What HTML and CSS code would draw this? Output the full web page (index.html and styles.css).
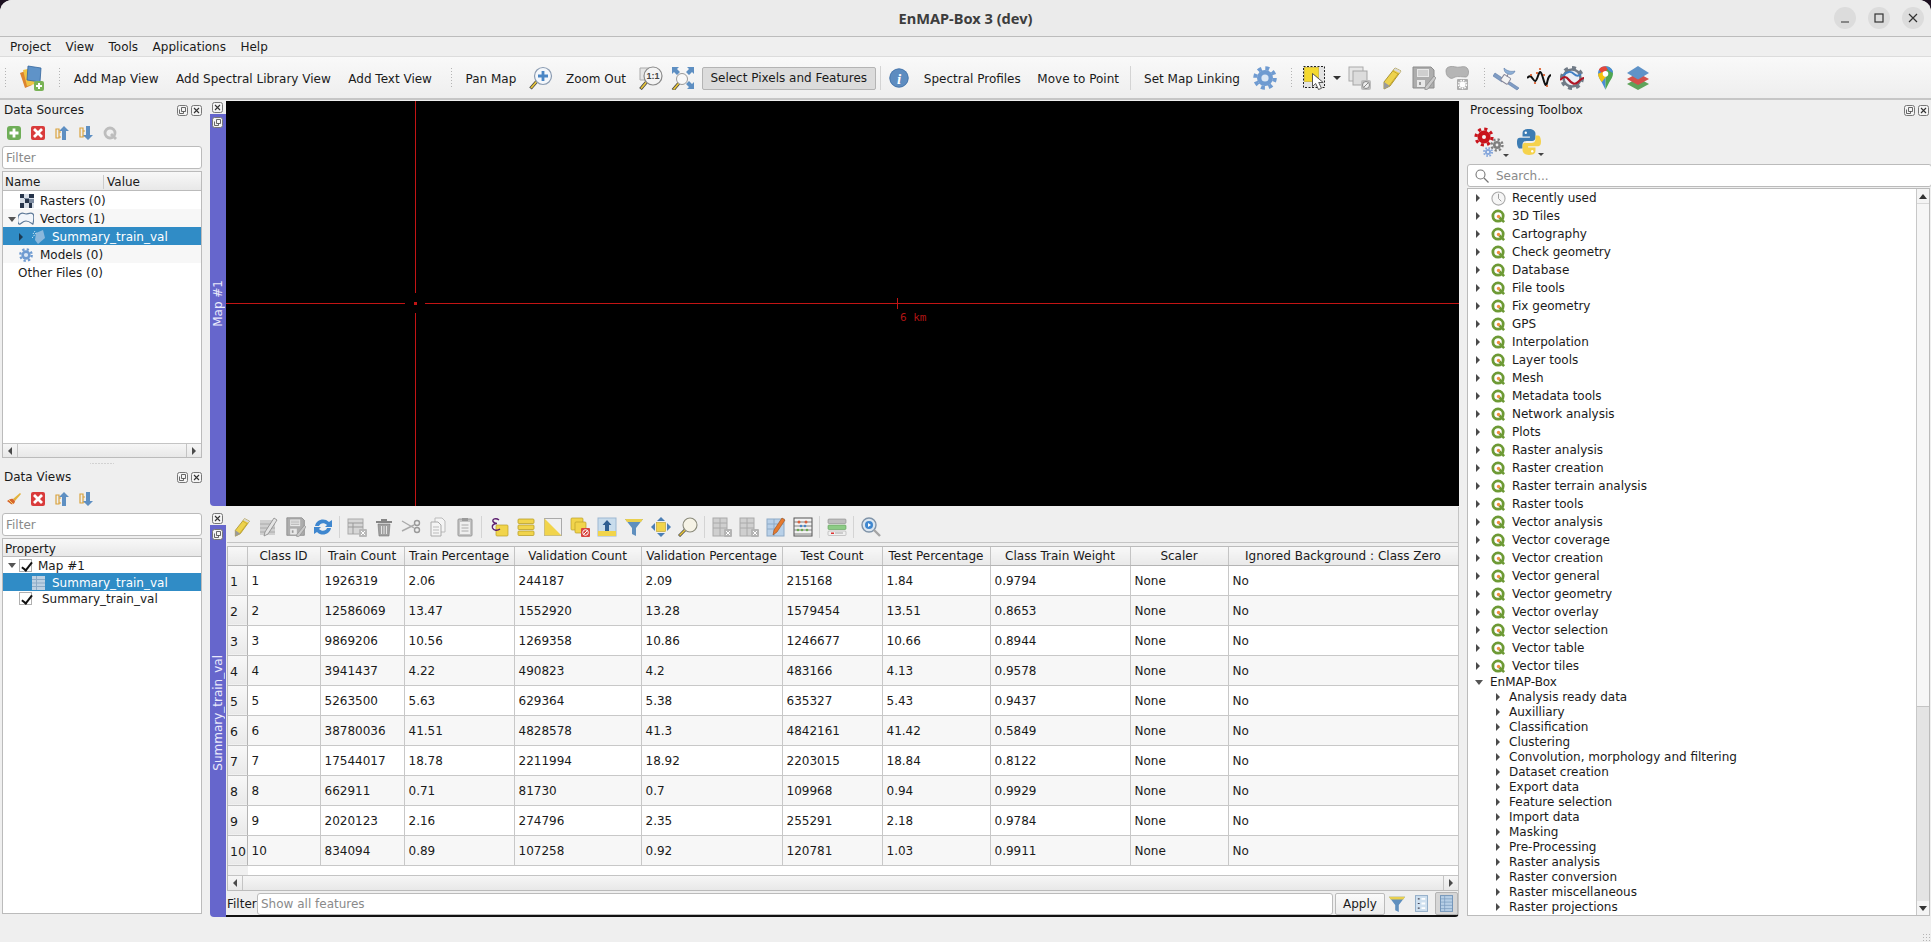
FILE: index.html
```html
<!DOCTYPE html>
<html lang="en">
<head>
    <meta charset="UTF-8">
    <title>EnMAP-Box 3 (dev)</title>
    <link rel="stylesheet" href="styles.css">
</head>
<body>

<!-- icon sprite -->
<svg class="sprite" xmlns="http://www.w3.org/2000/svg">
    <symbol id="i-project" viewBox="0 0 26 26"><path d="M1 8l8-3 4 15-7 3z" fill="#dd8430"/><path d="M4 5l9-2 3 16-8 2z" fill="#f0c445"/><path d="M9 1l13 2-1 14-13-2z" fill="#5f93c8" stroke="#34659c" stroke-width=".8"/><rect x="15" y="16" width="10" height="10" rx="2" fill="#79b356"/><path d="M20 18v6M17 21h6" stroke="#fff" stroke-width="2"/></symbol>
    <symbol id="i-zoomin" viewBox="0 0 24 24"><path d="M1.500 22.500l7-8" stroke="#444" stroke-width="3.400"/><path d="M2 22l6.500-7.500" stroke="#e8c53a" stroke-width="1.800"/><circle cx="14" cy="10" r="8.500" fill="#f4f7fb" stroke="#8b9cb2" stroke-width="1.200"/><path d="M14 5v10M9 10h10" stroke="#4a86c5" stroke-width="2.800"/></symbol>
    <symbol id="i-zoom1" viewBox="0 0 24 24"><path d="M1 2h11v12H1z" fill="#e6e6e6" stroke="#aaa"/><path d="M1.500 23l6-7" stroke="#444" stroke-width="3.400"/><path d="M2 22.500l5.500-6.500" stroke="#e8c53a" stroke-width="1.800"/><circle cx="14" cy="10" r="9" fill="#f4f4f4" stroke="#8a8a8a" stroke-width="1.200"/><text x="14" y="13" font-size="9" font-weight="bold" text-anchor="middle" font-family="Liberation Sans, sans-serif" fill="#444">1:1</text></symbol>
    <symbol id="i-zoomfull" viewBox="0 0 24 24"><path d="M1 1h7L6 3l3 3-3 3-3-3-2 2zM23 1v7l-2-2-3 3-3-3 3-3-2-2zM23 23h-7l2-2-3-3 3-3 3 3 2-2z" fill="#5e8fc2"/><path d="M2 24l6-7" stroke="#444" stroke-width="3.400"/><path d="M2.500 23.500l5.500-6.500" stroke="#e8c53a" stroke-width="1.800"/><circle cx="11" cy="13" r="5.500" fill="#f8f8f8" stroke="#999"/></symbol>
    <symbol id="i-info" viewBox="0 0 20 20"><circle cx="10" cy="10" r="9.600" fill="#5d8cc0"/><circle cx="10" cy="10" r="9.200" fill="none" stroke="#3f6fa5" stroke-width=".7"/><text x="10" y="16" font-size="15" font-weight="bold" font-style="italic" text-anchor="middle" font-family="Liberation Serif, serif" fill="#fff">i</text></symbol>
    <symbol id="i-gear" viewBox="0 0 24 24"><circle cx="12" cy="12" r="8" fill="#6f9bd1"/><circle cx="12" cy="12" r="9.800" fill="none" stroke="#6f9bd1" stroke-width="4" stroke-dasharray="3.900 3.800"/><circle cx="12" cy="12" r="3.600" fill="#dbe7f5"/></symbol>
    <symbol id="i-select" viewBox="0 0 24 24"><rect x=".5" y=".5" width="21" height="21" fill="#e4e4e4" stroke="#222" stroke-dasharray="2 1.500"/><rect x="1.500" y="1.500" width="14" height="14" fill="#f4d92f" stroke="#c8ac1c" stroke-width=".6"/><path d="M9.500 7.500v13l3.200-3 2.800 6 3-1.200-2.800-5.800h4.500z" fill="#fff" stroke="#444" stroke-width=".9"/></symbol>
    <symbol id="i-deselect" viewBox="0 0 24 24"><rect x="1" y="1" width="14" height="14" fill="#e6e6e6" stroke="#aaa"/><rect x="5" y="5" width="14" height="14" fill="#dcdcdc" stroke="#a5a5a5"/><rect x="13" y="14" width="10" height="10" rx="2" fill="#bcbcbc"/><circle cx="18" cy="19" r="3.500" fill="#eee" stroke="#888"/><path d="M16 21l4-4" stroke="#888"/></symbol>
    <symbol id="i-pencil" viewBox="0 0 24 24"><path d="M15 2l6 3-11 15-6 3 0-7z" fill="#edd24d" stroke="#a28c2c" stroke-width=".9"/><path d="M13 5l5 3-9 12" fill="none" stroke="#c9a92b" stroke-width="1"/><path d="M4 16l0 7 6-3z" fill="#9a9a9a"/><path d="M15 2l6 3-1.500 2-6-3z" fill="#d8d8d8"/></symbol>
    <symbol id="i-save" viewBox="0 0 24 24"><path d="M1 1h18l3 3v18H1z" fill="#adadad" stroke="#8c8c8c"/><rect x="5" y="3" width="12" height="8" fill="#e8e8e8"/><path d="M6 5h10M6 7h10M6 9h10" stroke="#aaa" stroke-width=".8"/><rect x="5" y="14" width="8" height="7" fill="#e8e8e8"/><rect x="7" y="16" width="2" height="3" fill="#999"/><path d="M22 10l2 2-8 11-3 1 0-3z" fill="#c9c9c9" stroke="#888" stroke-width=".7"/></symbol>
    <symbol id="i-vecgear" viewBox="0 0 26 26"><path d="M2 6c0-5 6-5 10-4s8-2 11 1 1 9-1 9-9-1-11 0-3 2-5 1-4-3-4-7z" fill="#b5b5b5" stroke="#999" stroke-width=".8"/><rect x="13" y="14" width="11" height="11" rx="1" fill="#adadad"/><circle cx="18.500" cy="19.500" r="3" fill="#fff"/><circle cx="18.500" cy="19.500" r="4" fill="none" stroke="#fff" stroke-width="1.400" stroke-dasharray="1.500 1.200"/></symbol>
    <symbol id="i-sat" viewBox="0 0 26 26"><path d="M2 8l9 6-2 3-9-6zM17 17l9 6-2 2-9-6z" fill="#7f9cc4" stroke="#5a7ba8" stroke-width=".6"/><rect x="9" y="11" width="8" height="7" rx="1" transform="rotate(33 13 14)" fill="#f4f4f4" stroke="#889"/><path d="M11 3c3 3 7 4 11 3-1 3-4 4-7 3s-4-3-4-6z" fill="#8eb0d6" stroke="#5a7ba8" stroke-width=".6"/><path d="M15 9l-1 3" stroke="#889"/></symbol>
    <symbol id="i-spectral" viewBox="0 0 24 24"><path d="M0 12c3-3 4-2 6 1s3 3 5-3 3-5 5 2 3 9 4 5 1-7 4-8" fill="none" stroke="#111" stroke-width="2"/><g fill="#d9531e"><circle cx="4" cy="9" r="1.100"/><circle cx="10" cy="7" r="1.100"/><circle cx="13" cy="3" r="1.100"/><circle cx="17" cy="9" r="1.100"/><circle cx="20" cy="20" r="1.100"/><circle cx="8" cy="17" r="1.100"/></g></symbol>
    <symbol id="i-hub" viewBox="0 0 24 24"><circle cx="12" cy="12" r="8.500" fill="#e9eef5" stroke="#707a86" stroke-width="2.500"/><circle cx="12" cy="12" r="10.500" fill="none" stroke="#707a86" stroke-width="3" stroke-dasharray="4 4.200"/><path d="M3 10c4-5 8-5 11-2s5 2 7 0" fill="none" stroke="#3f7fc4" stroke-width="1.800"/><path d="M0 14c4-4 6-4 9 0s6 5 9 2 4-4 6-4" fill="none" stroke="#b01626" stroke-width="2.200"/></symbol>
    <symbol id="i-pin" viewBox="0 0 16 26"><path d="M8 0C3 0 0 3.500 0 8c0 3 2 6 4 9l4 8z" fill="#4a8bd8"/><path d="M8 0c5 0 8 3.500 8 8 0 3-2 6-4 9l-4 8z" fill="#4fa653"/><path d="M1 3.500C2.500 1.200 5 0 8 0l3 2-6 7z" fill="#e6473a"/><path d="M8 0c4 0 8 3 8 7l-4-2z" fill="#4a8bd8"/><path d="M0 8c0 3 2 6 4 9l6-8-5-3z" fill="#f4c20d"/><circle cx="8" cy="8" r="3" fill="#fff"/></symbol>
    <symbol id="i-layers" viewBox="0 0 24 24"><path d="M12 12l11 6-11 6-11-6z" fill="#5fa35a"/><path d="M12 7l11 6-11 6-11-6z" fill="#d4504a"/><path d="M12 0l11 7-11 6.500L1 7z" fill="#5f93c8"/></symbol>
    <symbol id="i-add" viewBox="0 0 14 14"><rect width="14" height="14" rx="3" fill="#6fae58"/><path d="M7 2.500v9M2.500 7h9" stroke="#fff" stroke-width="2.800"/></symbol>
    <symbol id="i-remove" viewBox="0 0 14 14"><rect width="14" height="14" rx="2" fill="#d93b3b"/><path d="M3 3l8 8M11 3l-8 8" stroke="#fff" stroke-width="2.800"/></symbol>
    <symbol id="i-collapse" viewBox="0 0 14 14"><path d="M1 3h3v9H1zM4 6h2M4 11h2" fill="none" stroke="#d9a23c" stroke-width="1.200"/><path d="M9 0l5 5h-3v9H7V5H4z" fill="#5e8fc2"/></symbol>
    <symbol id="i-expand" viewBox="0 0 14 14"><path d="M1 2h3v9H1zM4 5h2M4 10h2" fill="none" stroke="#d9a23c" stroke-width="1.200"/><path d="M9 14l5-5h-3V0H7v9H4z" fill="#5e8fc2"/></symbol>
    <symbol id="i-greyq" viewBox="0 0 14 14"><circle cx="7" cy="7" r="5" fill="none" stroke="#bdbdbd" stroke-width="2.800"/><path d="M8 8l5 5" stroke="#bdbdbd" stroke-width="2.800"/></symbol>
    <symbol id="i-brush" viewBox="0 0 14 14"><path d="M13 1L6 7l2 2 6-7z" fill="#e2b23c"/><path d="M0 9c2-1 4-3 6-2l2 2c0 2-2 4-4 3z" fill="#d8652a"/><path d="M2 8l4 4" stroke="#f0d070"/></symbol>
    <symbol id="i-raster" viewBox="0 0 14 14"><rect width="14" height="14" fill="#d8dfe8"/><path d="M0 0h4v4H0zM9 0h5v4H9zM5 5h4v4H5zM0 9h4v5H0zM9 9h3v5H9z" fill="#27354b"/><path d="M4 4h5v1H4zM9 5h5v4H9z" fill="#7c8ba0"/></symbol>
    <symbol id="i-blob" viewBox="0 0 16 14"><path d="M2 2c3-2 4 0 6 0s5-2 7 0 0 9 0 10-3-3-7-3-5 4-7 3-2-8 1-10z" fill="#f2f6fb" stroke="#5e7a99" stroke-width="1.200"/></symbol>
    <symbol id="i-blobsel" viewBox="0 0 14 14"><path d="M4 3l7-3 2 8-7 6-3-4z" fill="#8bb8dc"/><path d="M1 4l2-3M0 8l5-6" stroke="#cfe3f2" stroke-dasharray="1.500 1"/></symbol>
    <symbol id="i-table" viewBox="0 0 13 14"><rect width="13" height="14" fill="#bcd0e2"/><path d="M0 3.500h13M0 7h13M0 10.500h13M4.500 0v14" stroke="#8caac6"/></symbol>
    <symbol id="i-clock" viewBox="0 0 16 16"><circle cx="8" cy="8" r="7" fill="#f6f6f6" stroke="#aaa" stroke-width="1.200"/><path d="M8 3v5l3 3" fill="none" stroke="#999"/></symbol>
    <symbol id="i-qgis" viewBox="0 0 16 16"><circle cx="7.500" cy="7.500" r="5.500" fill="#fff" stroke="#6d9a35" stroke-width="3"/><path d="M9 9l5 5" stroke="#6d9a35" stroke-width="2.800"/><circle cx="8" cy="8" r="1.800" fill="#ee8e3f"/></symbol>
    <symbol id="i-gears" viewBox="0 0 32 30"><circle cx="10" cy="10" r="6.500" fill="#c9141c"/><circle cx="10" cy="10" r="8" fill="none" stroke="#c9141c" stroke-width="3.200" stroke-dasharray="3.100 3.180"/><circle cx="10" cy="10" r="2" fill="#f4f4f4"/><circle cx="23" cy="18" r="4" fill="#7f7f7f"/><circle cx="23" cy="18" r="5.500" fill="none" stroke="#7f7f7f" stroke-width="2.400" stroke-dasharray="2.200 2.100"/><circle cx="23" cy="18" r="1.400" fill="#eee"/><circle cx="14" cy="25" r="3" fill="#86a7db"/><circle cx="14" cy="25" r="4" fill="none" stroke="#86a7db" stroke-width="2" stroke-dasharray="1.600 1.540"/><circle cx="14" cy="25" r="1" fill="#fff"/></symbol>
    <symbol id="i-python" viewBox="0 0 26 30"><path d="M13 1C7 1 6 3 6 6v3h8v1.500H3C0 10.500 0 14 0 16s1 6 3 6h3v-4c0-3 2-4 4.500-4h6c2 0 3.500-1.500 3.500-3.500V6c0-3-3-5-7-5z" fill="#3d7cb3"/><circle cx="9.500" cy="5" r="1.300" fill="#fff"/><path d="M13 29c6 0 7-2 7-5v-3h-8v-1.500h11c3 0 3-3.500 3-5.500s-1-6-3-6h-3v4c0 3-2 4-4.500 4h-6C7.500 15.500 6 17 6 19v5c0 3 3 5 7 5z" fill="#f5d24c"/><circle cx="16.500" cy="25" r="1.300" fill="#fff"/></symbol>
    <symbol id="i-search" viewBox="0 0 14 14"><circle cx="5.500" cy="5.500" r="4.500" fill="none" stroke="#777" stroke-width="1.100"/><path d="M9 9l4.500 4.500" stroke="#777" stroke-width="1.300"/></symbol>
    <symbol id="i-float" viewBox="0 0 11 11"><rect x=".5" y=".5" width="10" height="10" rx="2" fill="#f4f4f4" stroke="#777"/><path d="M4.500 2.500h4v4h-4z M2.500 4.500v4h4v-2" fill="none" stroke="#444" stroke-width=".8"/></symbol>
    <symbol id="i-close" viewBox="0 0 11 11"><rect x=".5" y=".5" width="10" height="10" rx="2" fill="#f4f4f4" stroke="#777"/><path d="M3 3l5 5M8 3l-5 5" stroke="#333" stroke-width="1.100"/></symbol>

    <symbol id="i-editmulti" viewBox="0 0 20 20"><path d="M1 3h15v15H1z" fill="#cfcfcf"/><path d="M1 7h15M1 11h15M1 15h15" stroke="#aaa"/><path d="M15 1l3 2-9 14-4 2 1-4z" fill="#e4e4e4" stroke="#888" stroke-width=".8"/></symbol>
    <symbol id="i-reload" viewBox="0 0 20 20"><path d="M2 9c1-6 9-9 14-4l3-2v7h-7l2-2c-3-3-7-2-8 1z" fill="#3f87cf"/><path d="M18 11c-1 6-9 9-14 4l-3 2v-7h7l-2 2c3 3 7 2 8-1z" fill="#3f87cf"/></symbol>
    <symbol id="i-newrow" viewBox="0 0 20 20"><rect x="1" y="2" width="15" height="15" fill="#d6d6d6" stroke="#aaa"/><path d="M1 6h15M1 10h15M6 6v11" stroke="#999"/><rect x="12" y="12" width="8" height="8" rx="1" fill="#b8b8b8"/><path d="M14 14l4 4M18 14l-4 4" stroke="#fff"/></symbol>
    <symbol id="i-trash" viewBox="0 0 20 20"><path d="M2 4h16v2H2zM7 2h6v2H7z" fill="#858585"/><path d="M4 7h12l-1 12H5z" fill="#a0a0a0" stroke="#777" stroke-width=".6"/><path d="M7.500 9v8M10 9v8M12.500 9v8" stroke="#e4e4e4"/></symbol>
    <symbol id="i-scissors" viewBox="0 0 20 20"><path d="M1 4l12 7M1 14l12-6" stroke="#aaa" stroke-width="1.400"/><circle cx="16" cy="6" r="2.500" fill="none" stroke="#999" stroke-width="1.400"/><circle cx="16" cy="13" r="2.500" fill="none" stroke="#999" stroke-width="1.400"/></symbol>
    <symbol id="i-copy" viewBox="0 0 20 20"><path d="M7 1h7l3 3v11H7z" fill="#f4f4f4" stroke="#bbb"/><path d="M3 5h7l3 3v11H3z" fill="#f4f4f4" stroke="#aaa"/><path d="M5 10h6M5 13h6M5 16h6" stroke="#bbb"/></symbol>
    <symbol id="i-paste" viewBox="0 0 20 20"><rect x="3" y="2" width="14" height="17" rx="1" fill="#c4c4c4" stroke="#999"/><rect x="5" y="5" width="10" height="12" fill="#efefef"/><rect x="7" y="1" width="6" height="3" fill="#999"/><path d="M6.500 8h7M6.500 11h7M6.500 14h7" stroke="#aaa"/></symbol>
    <symbol id="i-selexpr" viewBox="0 0 20 20"><rect x="7" y="8" width="12" height="11" rx="1" fill="#f1d44b" stroke="#b99f2a" stroke-width=".7"/><path d="M10 3C7 .5 3 2 4 4.500 5 6 7 6.500 8 6.500 5 6.500 2.500 8 3.500 11c1 2.500 5 3 7.500 1" fill="none" stroke="#5c1e6e" stroke-width="1.400"/></symbol>
    <symbol id="i-selall" viewBox="0 0 20 20"><g fill="#f1d44b" stroke="#b99f2a" stroke-width=".8"><rect x="2" y="2" width="16" height="4.500" rx="1"/><rect x="2" y="8" width="16" height="4.500" rx="1"/><rect x="2" y="14" width="16" height="4.500" rx="1"/></g></symbol>
    <symbol id="i-invert" viewBox="0 0 20 20"><rect x="1.500" y="1.500" width="17" height="17" fill="#f0f0f0" stroke="#aaa"/><path d="M1.500 1.500v17h17z" fill="#f1d44b"/></symbol>
    <symbol id="i-desel" viewBox="0 0 20 20"><rect x="1" y="1" width="12" height="12" rx="1" fill="#f1d44b" stroke="#b99f2a" stroke-width=".7"/><rect x="5" y="5" width="11" height="11" rx="1" fill="#f1d44b" stroke="#b99f2a" stroke-width=".7"/><rect x="11" y="11" width="9" height="9" rx="1" fill="#d8453e"/><circle cx="15.500" cy="15.500" r="2.800" fill="none" stroke="#fff"/><path d="M13.500 17.500l4-4" stroke="#fff"/></symbol>
    <symbol id="i-movesel" viewBox="0 0 20 20"><rect x="1" y="1" width="18" height="18" fill="#c8dcec" stroke="#9db8d2"/><rect x="1" y="14" width="18" height="5" fill="#f1d44b"/><path d="M10 3l4.500 5H12v6H8V8H5.500z" fill="#2f5f92"/></symbol>
    <symbol id="i-funnel" viewBox="0 0 20 20"><path d="M1 2h18L12 11v8l-4-2v-6z" fill="#5f8fbe"/><path d="M1 2h18l-2 3H3z" fill="#e9cf4e"/></symbol>
    <symbol id="i-panto" viewBox="0 0 20 20"><rect x="5.500" y="5.500" width="9" height="9" fill="#f1d44b" stroke="#b99f2a" stroke-width=".6"/><path d="M10 0l4 4H6zM10 20l-4-4h8zM0 10l4-4v8zM20 10l-4 4V6z" fill="#4c7fb5"/></symbol>
    <symbol id="i-zoomto" viewBox="0 0 20 20"><path d="M1 19l6-6" stroke="#444" stroke-width="3"/><path d="M1.500 18.500l5.500-5.500" stroke="#e8c53a" stroke-width="1.600"/><circle cx="12" cy="8" r="7" fill="#f6f3e6" stroke="#8a8a7a" stroke-width="1.100"/></symbol>
    <symbol id="i-newfield" viewBox="0 0 20 20"><rect x="1" y="1" width="14" height="18" fill="#cfcfcf" stroke="#aaa"/><path d="M8 1v18M1 6h14M1 11h14" stroke="#aaa"/><rect x="12" y="12" width="8" height="8" rx="1" fill="#b4b4b4"/><path d="M14 14l4 4M18 14l-4 4" stroke="#fff"/></symbol>
    <symbol id="i-fieldcalc" viewBox="0 0 20 20"><rect x="1" y="2" width="17" height="17" fill="#b8d0e8" stroke="#8eaac6"/><path d="M1 7h17M1 12h10M8 2v17" stroke="#8eaac6"/><path d="M16 1l3 2-8 12-4 3 1-5z" fill="#e67a2e" stroke="#9c4d18" stroke-width=".6"/></symbol>
    <symbol id="i-abacus" viewBox="0 0 20 20"><rect x="1" y="1" width="18" height="18" fill="#f2f2f2" stroke="#555"/><path d="M1 17h18M1 5h18M1 9h18M1 13h18" stroke="#666" stroke-width=".8"/><g fill="#d9603c"><circle cx="6" cy="5" r="1.500"/><circle cx="13" cy="5" r="1.500"/></g><g fill="#6aa84f"><circle cx="5" cy="13" r="1.300"/><circle cx="9" cy="13" r="1.300"/><circle cx="14" cy="13" r="1.300"/></g><g fill="#4a86c5"><circle cx="8" cy="9" r="1.300"/><circle cx="12" cy="9" r="1.300"/></g></symbol>
    <symbol id="i-cond" viewBox="0 0 20 20"><rect x="1" y="2" width="18" height="4.500" rx="1" fill="#bdbdbd" stroke="#8a8a8a" stroke-width=".6"/><rect x="1" y="8" width="18" height="4.500" rx="1" fill="#8ccb85" stroke="#5c9c55" stroke-width=".6"/><rect x="1" y="14" width="18" height="4.500" rx="1" fill="#efefef" stroke="#aaa" stroke-width=".6"/><rect x="4" y="15.500" width="3" height="1.500" fill="#d33"/><path d="M8 16h8" stroke="#aaa"/></symbol>
    <symbol id="i-actions" viewBox="0 0 20 20"><circle cx="8" cy="8" r="7" fill="#dbe6f0" stroke="#7f93a8" stroke-width="1.400"/><circle cx="8" cy="8" r="4" fill="#3f87cf"/><path d="M7 6l3 2-3 2z" fill="#fff"/><path d="M13 13l6 6" stroke="#a5a5a5" stroke-width="2.400"/></symbol>
    <symbol id="i-form" viewBox="0 0 14 18"><rect x=".5" y=".5" width="13" height="17" fill="#cfe0ef" stroke="#8eaac6"/><path d="M3 4h2M3 9h2M3 14h2" stroke="#445" stroke-width="1.200"/><path d="M7 4h4M7 9h4M7 14h4" stroke="#fff" stroke-width="2"/></symbol>
    <symbol id="i-grid" viewBox="0 0 14 18"><rect x=".5" y=".5" width="13" height="17" fill="#b7cfe6" stroke="#6f93b8"/><path d="M1 4h12M1 7.500h12M1 11h12M1 14.500h12M5 1v16" stroke="#7b9cc0" stroke-width=".8"/></symbol>
</svg>

<div class="window">

    <header class="titlebar">
        <div></div>
        <div class="title">EnMAP-Box 3 (dev)</div>
        <div class="win-buttons">
            <span class="win-btn"><svg viewBox="0 0 12 12"><path d="M2 10h8" stroke="#333" stroke-width="1.200"/></svg></span>
            <span class="win-btn"><svg viewBox="0 0 12 12"><rect x="2" y="2" width="8" height="8" fill="none" stroke="#333" stroke-width="1.200"/></svg></span>
            <span class="win-btn"><svg viewBox="0 0 12 12"><path d="M2 2l8 8M10 2l-8 8" stroke="#333" stroke-width="1.200"/></svg></span>
        </div>
    </header>

    <nav class="menubar">
        <span>Project</span>
        <span>View</span>
        <span>Tools</span>
        <span>Applications</span>
        <span>Help</span>
    </nav>

    <div class="toolbar">
        <span class="tb-handle tb-first"></span>
        <span class="tb-icon w34"><svg class="ic26"><use href="#i-project"/></svg></span>
        <span class="tb-handle"></span>
        <span class="tb-text">Add Map View</span>
        <span class="tb-text">Add Spectral Library View</span>
        <span class="tb-text">Add Text View</span>
        <span class="tb-handle"></span>
        <span class="tb-text">Pan Map</span>
        <span class="tb-icon"><svg class="ic24"><use href="#i-zoomin"/></svg></span>
        <span class="tb-text">Zoom Out</span>
        <span class="tb-icon"><svg class="ic24"><use href="#i-zoom1"/></svg></span>
        <span class="tb-icon"><svg class="ic24"><use href="#i-zoomfull"/></svg></span>
        <span class="tb-toggled">Select Pixels and Features</span>
        <span class="tb-sep"></span>
        <span class="tb-icon w28"><svg class="ic20"><use href="#i-info"/></svg></span>
        <span class="tb-text tb-profiles">Spectral Profiles</span>
        <span class="tb-text">Move to Point</span>
        <span class="tb-sep sep-tight"></span>
        <span class="tb-text">Set Map Linking</span>
        <span class="tb-icon"><svg class="ic24"><use href="#i-gear"/></svg></span>
        <span class="tb-handle"></span>
        <span class="tb-icon tb-select"><svg class="ic24"><use href="#i-select"/></svg></span>
        <span class="tb-caret"></span>
        <span class="tb-icon"><svg class="ic24"><use href="#i-deselect"/></svg></span>
        <span class="tb-icon"><svg class="ic24"><use href="#i-pencil"/></svg></span>
        <span class="tb-icon w33"><svg class="ic24"><use href="#i-save"/></svg></span>
        <span class="tb-icon w33"><svg class="ic26"><use href="#i-vecgear"/></svg></span>
        <span class="tb-handle"></span>
        <span class="tb-icon w33"><svg class="ic26"><use href="#i-sat"/></svg></span>
        <span class="tb-icon w33"><svg class="ic24"><use href="#i-spectral"/></svg></span>
        <span class="tb-icon w33"><svg class="ic24"><use href="#i-hub"/></svg></span>
        <span class="tb-icon w33"><svg class="ic-pin"><use href="#i-pin"/></svg></span>
        <span class="tb-icon w33"><svg class="ic24"><use href="#i-layers"/></svg></span>
    </div>

    <main class="workspace">

        <aside class="left-col">
            <section class="panel panel-sources">
                <div class="panel-title">
                    <span>Data Sources</span>
                    <span class="panel-btns"><svg class="ic11"><use href="#i-float"/></svg><svg class="ic11"><use href="#i-close"/></svg></span>
                </div>
                <div class="panel-tools">
                    <svg class="ic14"><use href="#i-add"/></svg>
                    <svg class="ic14"><use href="#i-remove"/></svg>
                    <svg class="ic14"><use href="#i-collapse"/></svg>
                    <svg class="ic14"><use href="#i-expand"/></svg>
                    <svg class="ic14"><use href="#i-greyq"/></svg>
                </div>
                <div class="line-input placeholder">Filter</div>
                <div class="tree">
                    <div class="tree-head">
                        <span class="head-name">Name</span>
                        <span>Value</span>
                    </div>
                    <div class="tree-body">
                        <div class="row pad-17"><svg class="ic14 gap-6"><use href="#i-raster"/></svg>Rasters (0)</div>
                        <div class="row alt pad-5"><span class="arrow open gap-2"></span><svg class="ic-blob gap-6"><use href="#i-blob"/></svg>Vectors (1)</div>
                        <div class="row selected pad-15"><span class="arrow gap-9 arrow-dark"></span><svg class="ic14 gap-6"><use href="#i-blobsel"/></svg>Summary_train_val</div>
                        <div class="row alt pad-16"><svg class="ic14 gap-7"><use href="#i-gear"/></svg>Models (0)</div>
                        <div class="row pad-15">Other Files (0)</div>
                    </div>
                    <div class="hscroll">
                        <span class="scroll-btn"><span class="arrow left"></span></span>
                        <span class="scroll-track"></span>
                        <span class="scroll-btn"><span class="arrow"></span></span>
                    </div>
                </div>
            </section>
            <div class="splitter"></div>
            <section class="panel panel-views">
                <div class="panel-title">
                    <span>Data Views</span>
                    <span class="panel-btns"><svg class="ic11"><use href="#i-float"/></svg><svg class="ic11"><use href="#i-close"/></svg></span>
                </div>
                <div class="panel-tools tools-views">
                    <svg class="ic14"><use href="#i-brush"/></svg>
                    <svg class="ic14"><use href="#i-remove"/></svg>
                    <svg class="ic14"><use href="#i-collapse"/></svg>
                    <svg class="ic14"><use href="#i-expand"/></svg>
                </div>
                <div class="line-input placeholder views-filter">Filter</div>
                <div class="tree">
                    <div class="tree-head head-views"><span>Property</span></div>
                    <div class="tree-body">
                        <div class="row row-map pad-5"><span class="arrow open gap-3"></span><span class="check gap-6"></span>Map #1</div>
                        <div class="row row-sel selected pad-29"><svg class="ic-table gap-7"><use href="#i-table"/></svg>Summary_train_val</div>
                        <div class="row row-last pad-16"><span class="check gap-10"></span>Summary_train_val</div>
                    </div>
                </div>
            </section>
        </aside>

        <div class="center-col">
            <section class="dock dock-map">
                <div class="dock-side">
                    <span class="dock-btn"><svg class="ic11"><use href="#i-close"/></svg></span>
                    <span class="dock-float"><svg class="ic11"><use href="#i-float"/></svg></span>
                    <div class="dock-label label-map"><span>Map #1</span></div>
                </div>
                <div class="map-canvas">
                    <svg class="crosshair">
                        <path d="M189.500 0V192M189.500 212V405M0 202.500H179M199 202.500H1233M671.500 197V208" stroke="#c21414" fill="none"/>
                        <rect x="188" y="201" width="3" height="3" fill="#c21414"/>
                        <text x="674" y="220" class="scale-text">6 km</text>
                    </svg>
                </div>
            </section>
            <section class="dock dock-table">
                <div class="dock-side">
                    <span class="dock-btn"><svg class="ic11"><use href="#i-close"/></svg></span>
                    <span class="dock-float"><svg class="ic11"><use href="#i-float"/></svg></span>
                    <div class="dock-label label-table"><span>Summary_train_val</span></div>
                </div>
                <div class="attr-view">
                    <div class="attr-tools">
                        <span class="at"><svg class="ic20"><use href="#i-pencil"/></svg></span>
                        <span class="at"><svg class="ic20"><use href="#i-editmulti"/></svg></span>
                        <span class="at"><svg class="ic20"><use href="#i-save"/></svg></span>
                        <span class="at"><svg class="ic20"><use href="#i-reload"/></svg></span>
                        <span class="at-sep"></span>
                        <span class="at"><svg class="ic20"><use href="#i-newrow"/></svg></span>
                        <span class="at"><svg class="ic20"><use href="#i-trash"/></svg></span>
                        <span class="at"><svg class="ic20"><use href="#i-scissors"/></svg></span>
                        <span class="at"><svg class="ic20"><use href="#i-copy"/></svg></span>
                        <span class="at"><svg class="ic20"><use href="#i-paste"/></svg></span>
                        <span class="at-sep"></span>
                        <span class="at"><svg class="ic20"><use href="#i-selexpr"/></svg></span>
                        <span class="at"><svg class="ic20"><use href="#i-selall"/></svg></span>
                        <span class="at"><svg class="ic20"><use href="#i-invert"/></svg></span>
                        <span class="at"><svg class="ic20"><use href="#i-desel"/></svg></span>
                        <span class="at"><svg class="ic20"><use href="#i-movesel"/></svg></span>
                        <span class="at"><svg class="ic20"><use href="#i-funnel"/></svg></span>
                        <span class="at"><svg class="ic20"><use href="#i-panto"/></svg></span>
                        <span class="at"><svg class="ic20"><use href="#i-zoomto"/></svg></span>
                        <span class="at-sep"></span>
                        <span class="at"><svg class="ic20"><use href="#i-newfield"/></svg></span>
                        <span class="at"><svg class="ic20"><use href="#i-newfield"/></svg></span>
                        <span class="at"><svg class="ic20"><use href="#i-fieldcalc"/></svg></span>
                        <span class="at"><svg class="ic20"><use href="#i-abacus"/></svg></span>
                        <span class="at-sep"></span>
                        <span class="at"><svg class="ic20"><use href="#i-cond"/></svg></span>
                        <span class="at-sep"></span>
                        <span class="at"><svg class="ic20"><use href="#i-actions"/></svg></span>
                    </div>
                    <div class="table-wrap">
                        <table class="attr-table">
                            <colgroup>
                                <col class="c-num"><col class="c-id"><col class="c-tc"><col class="c-tp"><col class="c-vc"><col class="c-vp"><col class="c-xc"><col class="c-xp"><col class="c-w"><col class="c-s"><col class="c-i">
                            </colgroup>
                            <thead>
                                <tr><th></th><th>Class ID</th><th>Train Count</th><th>Train Percentage</th><th>Validation Count</th><th>Validation Percentage</th><th>Test Count</th><th>Test Percentage</th><th>Class Train Weight</th><th>Scaler</th><th>Ignored Background : Class Zero</th></tr>
                            </thead>
                            <tbody>
                                <tr><th>1</th><td>1</td><td>1926319</td><td>2.06</td><td>244187</td><td>2.09</td><td>215168</td><td>1.84</td><td>0.9794</td><td>None</td><td>No</td></tr>
                                <tr><th>2</th><td>2</td><td>12586069</td><td>13.47</td><td>1552920</td><td>13.28</td><td>1579454</td><td>13.51</td><td>0.8653</td><td>None</td><td>No</td></tr>
                                <tr><th>3</th><td>3</td><td>9869206</td><td>10.56</td><td>1269358</td><td>10.86</td><td>1246677</td><td>10.66</td><td>0.8944</td><td>None</td><td>No</td></tr>
                                <tr><th>4</th><td>4</td><td>3941437</td><td>4.22</td><td>490823</td><td>4.2</td><td>483166</td><td>4.13</td><td>0.9578</td><td>None</td><td>No</td></tr>
                                <tr><th>5</th><td>5</td><td>5263500</td><td>5.63</td><td>629364</td><td>5.38</td><td>635327</td><td>5.43</td><td>0.9437</td><td>None</td><td>No</td></tr>
                                <tr><th>6</th><td>6</td><td>38780036</td><td>41.51</td><td>4828578</td><td>41.3</td><td>4842161</td><td>41.42</td><td>0.5849</td><td>None</td><td>No</td></tr>
                                <tr><th>7</th><td>7</td><td>17544017</td><td>18.78</td><td>2211994</td><td>18.92</td><td>2203015</td><td>18.84</td><td>0.8122</td><td>None</td><td>No</td></tr>
                                <tr><th>8</th><td>8</td><td>662911</td><td>0.71</td><td>81730</td><td>0.7</td><td>109968</td><td>0.94</td><td>0.9929</td><td>None</td><td>No</td></tr>
                                <tr><th>9</th><td>9</td><td>2020123</td><td>2.16</td><td>274796</td><td>2.35</td><td>255291</td><td>2.18</td><td>0.9784</td><td>None</td><td>No</td></tr>
                                <tr><th>10</th><td>10</td><td>834094</td><td>0.89</td><td>107258</td><td>0.92</td><td>120781</td><td>1.03</td><td>0.9911</td><td>None</td><td>No</td></tr>
                            </tbody>
                        </table>
                        <div class="table-rest"><span class="rest-corner"></span></div>
                        <div class="hscroll table-hscroll">
                            <span class="scroll-btn"><span class="arrow left"></span></span>
                            <span class="scroll-track"></span>
                            <span class="scroll-btn"><span class="arrow"></span></span>
                        </div>
                    </div>
                    <div class="filter-row">
                        <span class="filter-label">Filter</span>
                        <div class="line-input placeholder filter-input">Show all features</div>
                        <span class="apply-btn">Apply</span>
                        <svg class="ic-funnel"><use href="#i-funnel"/></svg>
                        <span class="view-btn"><svg class="ic-view"><use href="#i-form"/></svg></span>
                        <span class="view-btn active"><svg class="ic-view"><use href="#i-grid"/></svg></span>
                    </div>
                </div>
            </section>
        </div>

        <aside class="right-col">
            <div class="panel-title right-title">
                <span>Processing Toolbox</span>
                <span class="panel-btns"><svg class="ic11"><use href="#i-float"/></svg><svg class="ic11"><use href="#i-close"/></svg></span>
            </div>
            <div class="toolbox-tools">
                <span class="tool-menu"><svg class="ic-gears"><use href="#i-gears"/></svg><span class="mini-caret"></span></span>
                <span class="tool-menu"><svg class="ic-python"><use href="#i-python"/></svg><span class="mini-caret"></span></span>
            </div>
            <div class="line-input search-input">
                <svg class="ic14"><use href="#i-search"/></svg>
                <span class="placeholder">Search...</span>
            </div>
            <div class="toolbox-tree">
                <div class="toolbox-rows">
                    <div class="algo"><span class="arrow"></span><svg class="ic-algo"><use href="#i-clock"/></svg>Recently used</div>
                    <div class="algo"><span class="arrow"></span><svg class="ic-algo"><use href="#i-qgis"/></svg>3D Tiles</div>
                    <div class="algo"><span class="arrow"></span><svg class="ic-algo"><use href="#i-qgis"/></svg>Cartography</div>
                    <div class="algo"><span class="arrow"></span><svg class="ic-algo"><use href="#i-qgis"/></svg>Check geometry</div>
                    <div class="algo"><span class="arrow"></span><svg class="ic-algo"><use href="#i-qgis"/></svg>Database</div>
                    <div class="algo"><span class="arrow"></span><svg class="ic-algo"><use href="#i-qgis"/></svg>File tools</div>
                    <div class="algo"><span class="arrow"></span><svg class="ic-algo"><use href="#i-qgis"/></svg>Fix geometry</div>
                    <div class="algo"><span class="arrow"></span><svg class="ic-algo"><use href="#i-qgis"/></svg>GPS</div>
                    <div class="algo"><span class="arrow"></span><svg class="ic-algo"><use href="#i-qgis"/></svg>Interpolation</div>
                    <div class="algo"><span class="arrow"></span><svg class="ic-algo"><use href="#i-qgis"/></svg>Layer tools</div>
                    <div class="algo"><span class="arrow"></span><svg class="ic-algo"><use href="#i-qgis"/></svg>Mesh</div>
                    <div class="algo"><span class="arrow"></span><svg class="ic-algo"><use href="#i-qgis"/></svg>Metadata tools</div>
                    <div class="algo"><span class="arrow"></span><svg class="ic-algo"><use href="#i-qgis"/></svg>Network analysis</div>
                    <div class="algo"><span class="arrow"></span><svg class="ic-algo"><use href="#i-qgis"/></svg>Plots</div>
                    <div class="algo"><span class="arrow"></span><svg class="ic-algo"><use href="#i-qgis"/></svg>Raster analysis</div>
                    <div class="algo"><span class="arrow"></span><svg class="ic-algo"><use href="#i-qgis"/></svg>Raster creation</div>
                    <div class="algo"><span class="arrow"></span><svg class="ic-algo"><use href="#i-qgis"/></svg>Raster terrain analysis</div>
                    <div class="algo"><span class="arrow"></span><svg class="ic-algo"><use href="#i-qgis"/></svg>Raster tools</div>
                    <div class="algo"><span class="arrow"></span><svg class="ic-algo"><use href="#i-qgis"/></svg>Vector analysis</div>
                    <div class="algo"><span class="arrow"></span><svg class="ic-algo"><use href="#i-qgis"/></svg>Vector coverage</div>
                    <div class="algo"><span class="arrow"></span><svg class="ic-algo"><use href="#i-qgis"/></svg>Vector creation</div>
                    <div class="algo"><span class="arrow"></span><svg class="ic-algo"><use href="#i-qgis"/></svg>Vector general</div>
                    <div class="algo"><span class="arrow"></span><svg class="ic-algo"><use href="#i-qgis"/></svg>Vector geometry</div>
                    <div class="algo"><span class="arrow"></span><svg class="ic-algo"><use href="#i-qgis"/></svg>Vector overlay</div>
                    <div class="algo"><span class="arrow"></span><svg class="ic-algo"><use href="#i-qgis"/></svg>Vector selection</div>
                    <div class="algo"><span class="arrow"></span><svg class="ic-algo"><use href="#i-qgis"/></svg>Vector table</div>
                    <div class="algo"><span class="arrow"></span><svg class="ic-algo"><use href="#i-qgis"/></svg>Vector tiles</div>
                    <div class="algo provider"><span class="arrow open"></span>EnMAP-Box</div>
                    <div class="algo sub"><span class="arrow"></span>Analysis ready data</div>
                    <div class="algo sub"><span class="arrow"></span>Auxilliary</div>
                    <div class="algo sub"><span class="arrow"></span>Classification</div>
                    <div class="algo sub"><span class="arrow"></span>Clustering</div>
                    <div class="algo sub"><span class="arrow"></span>Convolution, morphology and filtering</div>
                    <div class="algo sub"><span class="arrow"></span>Dataset creation</div>
                    <div class="algo sub"><span class="arrow"></span>Export data</div>
                    <div class="algo sub"><span class="arrow"></span>Feature selection</div>
                    <div class="algo sub"><span class="arrow"></span>Import data</div>
                    <div class="algo sub"><span class="arrow"></span>Masking</div>
                    <div class="algo sub"><span class="arrow"></span>Pre-Processing</div>
                    <div class="algo sub"><span class="arrow"></span>Raster analysis</div>
                    <div class="algo sub"><span class="arrow"></span>Raster conversion</div>
                    <div class="algo sub"><span class="arrow"></span>Raster miscellaneous</div>
                    <div class="algo sub"><span class="arrow"></span>Raster projections</div>
                </div>
                <div class="vscroll">
                    <span class="vscroll-btn"><span class="arrow up"></span></span>
                    <span class="vscroll-thumb"></span>
                    <span class="vscroll-rest"></span>
                    <span class="vscroll-btn"><span class="arrow down"></span></span>
                </div>
            </div>
        </aside>
    </main>

    <footer class="statusbar"><span class="grip"></span></footer>
</div>

</body>
</html>
```

FILE: styles.css
```css
* {
    box-sizing: border-box;
}

html, body {
    margin: 0;
    padding: 0;
    height: 100%;
    overflow: hidden;
}

body {
    background: #1c1020;
    font-family: "DejaVu Sans", sans-serif;
    font-size: 12px;
    color: #1a1a1a;
}

.sprite {
    display: none;
}

.window {
    display: flex;
    flex-direction: column;
    width: 1931px;
    height: 942px;
    background: #efefef;
    border-radius: 12px 12px 0 0;
    overflow: hidden;
}

/* sizes for inline icons */
.ic11 { width: 11px; height: 11px; flex: none; }
.ic14 { width: 14px; height: 14px; flex: none; }
.ic20 { width: 20px; height: 20px; flex: none; }
.ic24 { width: 24px; height: 24px; flex: none; }
.ic26 { width: 26px; height: 26px; flex: none; }
.ic-pin { width: 15px; height: 25px; flex: none; }
.ic-blob { width: 16px; height: 14px; flex: none; }
.ic-table { width: 13px; height: 14px; flex: none; }
.ic-algo { width: 15px; height: 15px; flex: none; margin-right: 6px; }
.ic-gears { width: 32px; height: 30px; flex: none; }
.ic-python { width: 24px; height: 28px; flex: none; }
.ic-funnel { width: 18px; height: 18px; flex: none; margin: 0 4px 0 3px; }
.ic-view { width: 13px; height: 17px; flex: none; }

.placeholder {
    color: #8a8a8a;
}

/* title bar */
.titlebar {
    display: grid;
    grid-template-columns: 1fr auto 1fr;
    align-items: center;
    height: 37px;
    background: #ebebeb;
    border-bottom: 1px solid #bcbcbc;
}

.title {
    font-family: "Noto Sans", sans-serif;
    font-weight: 700;
    font-size: 14.600px;
    color: #3d3d3d;
}

.win-buttons {
    display: flex;
    justify-content: flex-end;
    gap: 12px;
    padding-right: 7px;
}

.win-btn {
    display: flex;
    align-items: center;
    justify-content: center;
    width: 22px;
    height: 22px;
    border-radius: 50%;
    background: #dcdcdc;
}

.win-btn svg {
    width: 12px;
    height: 12px;
}

/* menu */
.menubar {
    display: flex;
    align-items: center;
    gap: 14.500px;
    height: 20px;
    padding-left: 10px;
    background: #efefef;
    border-bottom: 1px solid #dcdcdc;
}

/* main toolbar */
.toolbar {
    display: flex;
    align-items: center;
    height: 43px;
    padding-top: 1px;
    background: linear-gradient(to bottom, #f9f9f9, #eeeeee);
    border-bottom: 2px solid #c6c6c6;
}

.tb-text {
    padding: 1px 8.800px 0;
    white-space: nowrap;
}

.tb-profiles {
    margin-left: 2.500px;
    margin-right: -1px;
}

.tb-icon {
    display: flex;
    align-items: center;
    justify-content: center;
    width: 32px;
    flex: none;
}

.tb-select {
    margin-left: 2px;
    margin-right: -1px;
}

.w28 { width: 28px; }
.w33 { width: 33px; }
.w34 { width: 34px; }

.tb-handle {
    flex: none;
    width: 4px;
    height: 22px;
    margin: 0 3px 0 9px;
    background-image: radial-gradient(circle, #b4b4b4 0.7px, transparent 0.8px);
    background-size: 3px 3px;
}

.tb-first {
    margin: 0 7px 0 4px;
}

.tb-sep {
    flex: none;
    width: 1px;
    height: 24px;
    margin: 0 4px;
    background: #d4d4d4;
}

.sep-tight {
    margin-left: 2.500px;
}

.tb-caret {
    flex: none;
    width: 0;
    height: 0;
    margin: 0 3px 0 3px;
    border-left: 4px solid transparent;
    border-right: 4px solid transparent;
    border-top: 4px solid #333;
}

.tb-toggled {
    flex: none;
    height: 23px;
    line-height: 21px;
    margin-left: 3px;
    padding: 0 7.500px;
    background: #dcdcdc;
    border: 1px solid #b4b4b4;
    border-radius: 2px;
    white-space: nowrap;
}

/* workspace */
.workspace {
    display: flex;
    height: 817px;
}

.left-col {
    display: flex;
    flex-direction: column;
    width: 210px;
    flex: none;
    padding-left: 2px;
    padding-right: 8px;
}

.panel {
    display: flex;
    flex-direction: column;
}

.panel-sources {
    height: 360px;
    padding-bottom: 2px;
}

.panel-sources .row {
    padding-top: 2px;
}

.panel-views {
    flex: 1;
    min-height: 0;
    padding-bottom: 3px;
}

.splitter {
    height: 7px;
    flex: none;
    background-image: radial-gradient(circle, #b4b4b4 0.7px, transparent 0.8px);
    background-size: 3px 3px;
    background-repeat: repeat-x;
    background-position: center;
    background-clip: content-box;
    padding: 2px 88px;
}

.panel-title {
    display: flex;
    align-items: center;
    justify-content: space-between;
    height: 20px;
    padding-left: 2px;
    flex: none;
}

.panel-btns {
    display: flex;
    gap: 3px;
}

.panel-tools {
    display: flex;
    align-items: center;
    gap: 10px;
    height: 26px;
    flex: none;
    padding-left: 5px;
}

.tools-views {
    height: 24px;
}

.views-filter {
    margin-top: 2px;
}

.line-input {
    display: flex;
    align-items: center;
    flex: none;
    height: 23px;
    padding-left: 3px;
    background: #fff;
    border: 1px solid #bbb;
    border-radius: 3px;
}

.tree {
    display: flex;
    flex-direction: column;
    flex: 1;
    min-height: 0;
    margin-top: 2px;
    background: #fff;
    border: 1px solid #bbb;
}

.tree-head {
    display: flex;
    align-items: center;
    height: 19px;
    flex: none;
    padding: 2px 0 0 2px;
    background: linear-gradient(to bottom, #f8f8f8, #e8e8e8);
    border-bottom: 1px solid #bbb;
}

.head-views {
    height: 18px;
}

.head-name {
    width: 99px;
    margin-right: 3px;
    border-right: 1px solid #ccc;
}

.tree-body {
    flex: 1;
    min-height: 0;
}

.row {
    display: flex;
    align-items: center;
    height: 18px;
    white-space: nowrap;
}

.row-map {
    height: 16px;
    padding-top: 1px;
}

.row-sel {
    padding-top: 1px;
}

.row-last {
    height: 15px;
}

.alt { background: #f7f7f7; }
.selected { background: #308cc6; color: #fff; }

.arrow {
    display: inline-block;
    flex: none;
    width: 0;
    height: 0;
    margin-left: 1px;
    margin-right: 1px;
    border-top: 4px solid transparent;
    border-bottom: 4px solid transparent;
    border-left: 4px solid #4a4a4a;
}

.arrow.open {
    margin-left: 0;
    border-left: 4px solid transparent;
    border-right: 4px solid transparent;
    border-top: 5px solid #555;
    border-bottom: 0;
}

.arrow.left {
    border-left: 0;
    border-right: 4px solid #4a4a4a;
}

.arrow.up {
    margin: 0;
    border-left: 4px solid transparent;
    border-right: 4px solid transparent;
    border-bottom: 5px solid #333;
    border-top: 0;
}

.arrow.down {
    margin: 0;
    border-left: 4px solid transparent;
    border-right: 4px solid transparent;
    border-top: 5px solid #333;
    border-bottom: 0;
}

.arrow-dark {
    border-left-color: #1c3a52;
}

.pad-5 { padding-left: 5px; }
.pad-15 { padding-left: 15px; }
.pad-16 { padding-left: 16px; }
.pad-17 { padding-left: 17px; }
.pad-29 { padding-left: 29px; }
.gap-2 { margin-right: 2px; }
.gap-3 { margin-right: 3px; }
.gap-6 { margin-right: 6px; }
.gap-7 { margin-right: 7px; }
.gap-9 { margin-right: 9px; }
.gap-10 { margin-right: 10px; }

.check {
    position: relative;
    flex: none;
    width: 13px;
    height: 13px;
    background: #fff;
    border: 1px solid #b0b0b0;
}

.check::after {
    content: "";
    position: absolute;
    left: 3.500px;
    top: 0;
    width: 4px;
    height: 9px;
    border-right: 2px solid #111;
    border-bottom: 2px solid #111;
    transform: rotate(38deg);
}

.hscroll {
    display: flex;
    height: 14px;
    flex: none;
    background: linear-gradient(to bottom, #f6f6f6, #e8e8e8);
    border-top: 1px solid #c4c4c4;
}

.scroll-btn {
    display: flex;
    align-items: center;
    justify-content: center;
    width: 14px;
    flex: none;
}

.scroll-track {
    flex: 1;
    border-left: 1px solid #c4c4c4;
    border-right: 1px solid #c4c4c4;
}

/* docks */
.center-col {
    display: flex;
    flex-direction: column;
    width: 1249px;
    flex: none;
}

.dock {
    display: flex;
}

.dock-map {
    height: 406px;
    margin-bottom: 1px;
}

.dock-table {
    flex: 1;
    min-height: 0;
}

.dock-side {
    position: relative;
    display: flex;
    flex-direction: column;
    width: 16px;
    flex: none;
}

.dock-btn {
    display: flex;
    align-items: center;
    justify-content: center;
    height: 11px;
    margin-top: 2px;
    flex: none;
    padding-right: 1px;
}

.dock-table .dock-btn {
    margin-top: 6px;
}

/* float button sits over the coloured strip */
.dock-float {
    position: absolute;
    left: 2px;
    top: 17px;
    display: flex;
}

.dock-table .dock-float {
    top: 22px;
}

.dock-label {
    display: flex;
    align-items: center;
    justify-content: center;
    flex: 1;
    margin-top: 1px;
    background: #6666cc;
    color: #e9e9fb;
    border-radius: 0 0 0 4px;
}

.dock-label span {
    writing-mode: vertical-rl;
    transform: rotate(180deg);
}

.label-map { padding-bottom: 14px; }
.label-table { padding-bottom: 16px; }

.map-canvas {
    position: relative;
    flex: 1;
    margin-top: 1px;
    background: #000;
}

.crosshair {
    position: absolute;
    left: 0;
    top: 0;
    width: 100%;
    height: 100%;
}

.scale-text {
    font-family: "DejaVu Sans Mono", monospace;
    font-size: 11px;
    fill: #b01515;
}

.attr-view {
    display: flex;
    flex-direction: column;
    flex: 1;
    min-width: 0;
    padding-left: 1px;
    border-right: 1px solid #c4c4c4;
    border-bottom: 2px solid #111;
    border-bottom-right-radius: 4px;
}

.attr-tools {
    display: flex;
    align-items: center;
    height: 36px;
    flex: none;
    padding: 5px 0 0 1px;
    border-bottom: 1px solid #c4c4c4;
}

.at {
    display: flex;
    align-items: center;
    justify-content: center;
    width: 27px;
    flex: none;
}

.at-sep {
    width: 1px;
    height: 22px;
    margin: 0 3px;
    flex: none;
    background: #d4d4d4;
}

.table-wrap {
    flex: none;
    margin-top: 3px;
    background: #fff;
    border: 1px solid #bbb;
    border-right: 0;
}

.attr-table {
    width: 1230px;
    table-layout: fixed;
    border-collapse: collapse;
}

.c-num { width: 19px; }
.c-id { width: 73px; }
.c-tc { width: 84px; }
.c-tp { width: 110px; }
.c-vc { width: 127px; }
.c-vp { width: 141px; }
.c-xc { width: 100px; }
.c-xp { width: 108px; }
.c-w { width: 140px; }
.c-s { width: 98px; }
.c-i { width: 230px; }

.attr-table thead th {
    height: 18px;
    padding: 0;
    font-weight: 400;
    text-align: center;
    white-space: nowrap;
    overflow: hidden;
    background: linear-gradient(to bottom, #f8f8f8, #e9e9e9);
    border-right: 1px solid #c4c4c4;
    border-bottom: 1px solid #b4b4b4;
}

.attr-table tbody th {
    padding: 2px 0 0 2px;
    font-size: 12.500px;
    font-weight: 400;
    text-align: left;
    background: linear-gradient(to bottom, #f8f8f8, #e9e9e9);
    border-right: 1px solid #b4b4b4;
    border-bottom: 1px solid #c4c4c4;
}

.attr-table td {
    height: 30px;
    padding: 2px 0 0 4px;
    border-right: 1px solid #c8c8c8;
    border-bottom: 1px solid #c8c8c8;
}

.attr-table tbody tr:nth-child(even) td {
    background: #f7f7f7;
}

.table-rest {
    height: 9px;
    background: #fff;
}

.rest-corner {
    display: block;
    width: 20px;
    height: 100%;
    background: #f0f0f0;
}

.table-hscroll {
    height: 15px;
}

.filter-row {
    display: flex;
    align-items: center;
    height: 25px;
    flex: none;
    padding-top: 1px;
}

.filter-label {
    width: 30px;
    flex: none;
}

.filter-input {
    flex: 1;
    height: 22px;
}

.apply-btn {
    flex: none;
    width: 50px;
    height: 22px;
    line-height: 20px;
    margin-left: 2px;
    text-align: center;
    background: linear-gradient(to bottom, #fafafa, #ececec);
    border: 1px solid #bbb;
    border-radius: 2px;
}

.view-btn {
    display: flex;
    align-items: center;
    justify-content: center;
    flex: none;
    width: 23px;
    height: 23px;
    border: 1px solid transparent;
}

.view-btn.active {
    margin-left: 2px;
    background: #d6d6d6;
    border-color: #b4b4b4;
    border-radius: 2px;
}

/* processing toolbox */
.right-col {
    display: flex;
    flex-direction: column;
    flex: 1;
    min-width: 0;
    padding-left: 8px;
}

.right-title {
    padding: 0 2px 0 3px;
}

.toolbox-tools {
    display: flex;
    align-items: center;
    gap: 8px;
    height: 44px;
    flex: none;
    padding-left: 7px;
}

.tool-menu {
    position: relative;
    display: flex;
}

.mini-caret {
    width: 0;
    height: 0;
    align-self: flex-end;
    margin-left: -3px;
    margin-bottom: 0;
    border-left: 3px solid transparent;
    border-right: 3px solid transparent;
    border-top: 3px solid #444;
}

.search-input {
    gap: 7px;
    padding-left: 7px;
    margin-right: -1px;
}

.toolbox-tree {
    display: flex;
    height: 728px;
    flex: none;
    margin-top: 1px;
    margin-right: 1px;
    background: #fff;
    border: 1px solid #bbb;
    overflow: hidden;
}

.toolbox-rows {
    flex: 1;
    min-width: 0;
    overflow: hidden;
}

.algo {
    display: flex;
    align-items: center;
    height: 18px;
    padding-left: 7px;
    white-space: nowrap;
}

.algo .arrow {
    margin-right: 11px;
}

.provider {
    height: 14px;
}

.provider .arrow {
    margin-right: 7px;
}

.sub {
    height: 15px;
    padding-left: 27px;
}

.sub .arrow {
    margin-right: 9px;
}

.vscroll {
    display: flex;
    flex-direction: column;
    width: 13px;
    flex: none;
    background: #e4e4e4;
    border-left: 1px solid #c8c8c8;
}

.vscroll-btn {
    display: flex;
    align-items: center;
    justify-content: center;
    height: 14px;
    flex: none;
    background: #f4f4f4;
}

.vscroll-thumb {
    height: 504px;
    flex: none;
    background: #f6f6f6;
    border-top: 1px solid #d8d8d8;
    border-bottom: 1px solid #c4c4c4;
}

.vscroll-rest {
    flex: 1;
}

.statusbar {
    display: flex;
    justify-content: flex-end;
    align-items: flex-end;
    flex: 1;
    background: #efefef;
}

.grip {
    width: 9px;
    height: 9px;
    background-image: radial-gradient(circle, #b4b4b4 0.7px, transparent 0.8px);
    background-size: 3px 3px;
}
```
